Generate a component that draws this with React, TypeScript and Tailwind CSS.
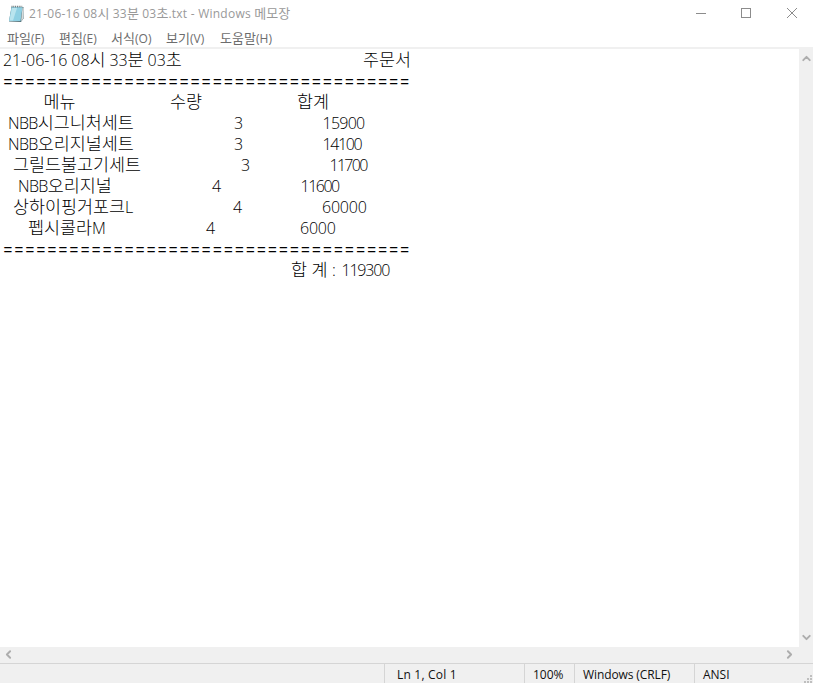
import React from "react";
import { ChevronDown, ChevronLeft, ChevronRight, ChevronUp } from "lucide-react";

const KO = /([\uac00-\ud7a3]+)/;

// Hangul and Latin runs are sized separately so both sit at the same optical height.
function Mixed({ text, hangul, latin }: { text: string; hangul: string; latin: string }) {
  return (
    <>
      {text.split(KO).filter(Boolean).map((part, i) => (
        <span key={i} className={KO.test(part) ? `font-['Noto_Sans_CJK_KR',sans-serif] tracking-normal ${hangul}` : latin}>
          {part}
        </span>
      ))}
    </>
  );
}

type Cell = [text: string, box: string];

const rule = "=".repeat(37);

const rows: Cell[][] = [
  [["21-06-16 08시 33분 03초", "w-[363px] pl-[3px] tracking-[-0.1px]"], ["주문서", ""]],
  [[rule, "pl-[3.5px] tracking-[2.26px]"]],
  [["메뉴", "w-[170px] pl-[43.5px]"], ["수량", "w-[127px]"], ["합계", ""]],
  [["NBB시그니처세트", "w-[234px] pl-[8px] tracking-[-0.65px]"], ["3", "w-[88.5px]"], ["15900", "tracking-[-0.75px]"]],
  [["NBB오리지널세트", "w-[234px] pl-[8px] tracking-[-0.65px]"], ["3", "w-[88.5px]"], ["14100", "tracking-[-1.4px]"]],
  [["그릴드불고기세트", "w-[241px] pl-[13px]"], ["3", "w-[88.5px]"], ["11700", "tracking-[-1.7px]"]],
  [["NBB오리지널", "w-[212px] pl-[18px] tracking-[-0.65px]"], ["4", "w-[88.5px]"], ["11600", "tracking-[-1.5px]"]],
  [["상하이핑거포크L", "w-[233px] pl-[13px]"], ["4", "w-[89px]"], ["60000", "tracking-[-0.2px]"]],
  [["펩시콜라M", "w-[206px] pl-[28px] tracking-[-0.65px]"], ["4", "w-[94px]"], ["6000", "tracking-[-0.2px]"]],
  [[rule, "pl-[3.5px] tracking-[2.26px]"]],
  [["합 계 : ", "w-[341.5px] pl-[291px] tracking-[0.4px]"], ["119300", "tracking-[-1.2px]"]],
];

const menus: Cell[] = [
  ["파일(F)", "w-[52px]"],
  ["편집(E)", "w-[52px]"],
  ["서식(O)", "w-[55px]"],
  ["보기(V)", "w-[54px]"],
  ["도움말(H)", "w-[60px]"],
];

function NotepadIcon() {
  return (
    <svg width="17" height="18" viewBox="0 0 17 18" className="shrink-0">
      <path d="M3.5 2 15.5 2 15.5 13.5 13 17 1 16.5Z" fill="#56747c" />
      <path d="M3.5 2H14.5L12.5 16H1Z" fill="#8fd0e3" />
      <path d="M4 3H9L5 15.5H1.5Z" fill="#b9e4ee" />
      <path d="M14.5 2.5 15.8 3.5 15 14 13 16.5Z" fill="#d6dcdc" />
      <path d="M3.5 1.6H14.5" stroke="#68777b" strokeWidth="1.6" strokeDasharray="1 .8" />
    </svg>
  );
}

export default function App() {
  return (
    <div className="flex h-[683px] w-[813px] flex-col overflow-hidden bg-white font-['Open_Sans','Noto_Sans_CJK_KR',sans-serif] whitespace-pre">
      <header className="flex h-[27px] shrink-0 items-center pl-[8px] text-[#999]">
        <NotepadIcon />
        <div className="ml-[4px] flex-1 pb-[2px] leading-[24px]">
          <Mixed text="21-06-16 08시 33분 03초.txt - Windows 메모장" hangul="text-[13px]" latin="text-[12px] tracking-[0.24px]" />
        </div>
        <svg width="118" height="27" viewBox="0 0 118 27" fill="none" stroke="#8c8c8c" shapeRendering="crispEdges">
          <path d="M1 13.5H11M46.5 8.5H55.5V17.5H46.5Z" />
          <path d="M92 8 102 18M102 8 92 18" shapeRendering="auto" />
        </svg>
      </header>
      <nav className="flex h-[20px] shrink-0 pl-[7px] leading-[20px] text-[#6d6d6d]">
        {menus.map(([text, box]) => (
          <div key={text} className={box}>
            <Mixed text={text} hangul="text-[13px]" latin="text-[12px] tracking-[0.1px]" />
          </div>
        ))}
      </nav>
      <div className="flex h-[600px] shrink-0 border-t-2 border-[#f0f0f0]">
        <main className="-mt-px flex-1 text-black">
          {rows.map((cells, i) => (
            <div key={i} className={`flex h-[21px] items-baseline leading-[21px] ${cells[0][0] === rule ? "pt-[2px]" : ""}`}>
              {cells.map(([text, box], j) => (
                <div key={j} className={`shrink-0 ${box}`}>
                  <Mixed
                    text={text}
                    hangul="text-[17.4px] font-light"
                    latin={text === rule ? "font-['Liberation_Sans',sans-serif] text-[15px]" : "text-[16px] font-light"}
                  />
                </div>
              ))}
            </div>
          ))}
        </main>
        <div className="flex w-[14px] flex-col items-center justify-between bg-[#f0f0f0] pt-[3px] pb-[3px] text-[#adadad]">
          <ChevronUp size={13} strokeWidth={3.5} />
          <ChevronDown size={13} strokeWidth={3.5} />
        </div>
      </div>
      <div className="flex h-[16px] shrink-0 items-center justify-between bg-[#f0f0f0] pr-[17px] pb-[2px] pl-[2px] text-[#adadad]">
        <ChevronLeft size={13} strokeWidth={3.5} />
        <ChevronRight size={13} strokeWidth={3.5} />
      </div>
      <footer className="flex h-[20px] shrink-0 border-t border-[#d5d5d5] bg-[#f0f0f0] pl-[384px] text-[12px] leading-[22px] text-[#111]">
        <div className="w-[140px] border-l border-[#d5d5d5] pl-[12px] tracking-[0.2px]">Ln 1, Col 1</div>
        <div className="w-[50px] border-l border-[#d5d5d5] pl-[8px]">100%</div>
        <div className="w-[120px] border-l border-[#d5d5d5] pl-[8px] tracking-[-0.1px]">Windows (CRLF)</div>
        <div className="flex-1 border-l border-[#d5d5d5] pl-[8px]">ANSI</div>
        <svg width="9" height="19" viewBox="0 0 9 19" fill="#bfbfbf">
          <path d="M6 11h2v2h-2zM3 14h2v2h-2zM6 14h2v2h-2zM0 17h2v2h-2zM3 17h2v2h-2zM6 17h2v2h-2z" />
        </svg>
      </footer>
    </div>
  );
}
